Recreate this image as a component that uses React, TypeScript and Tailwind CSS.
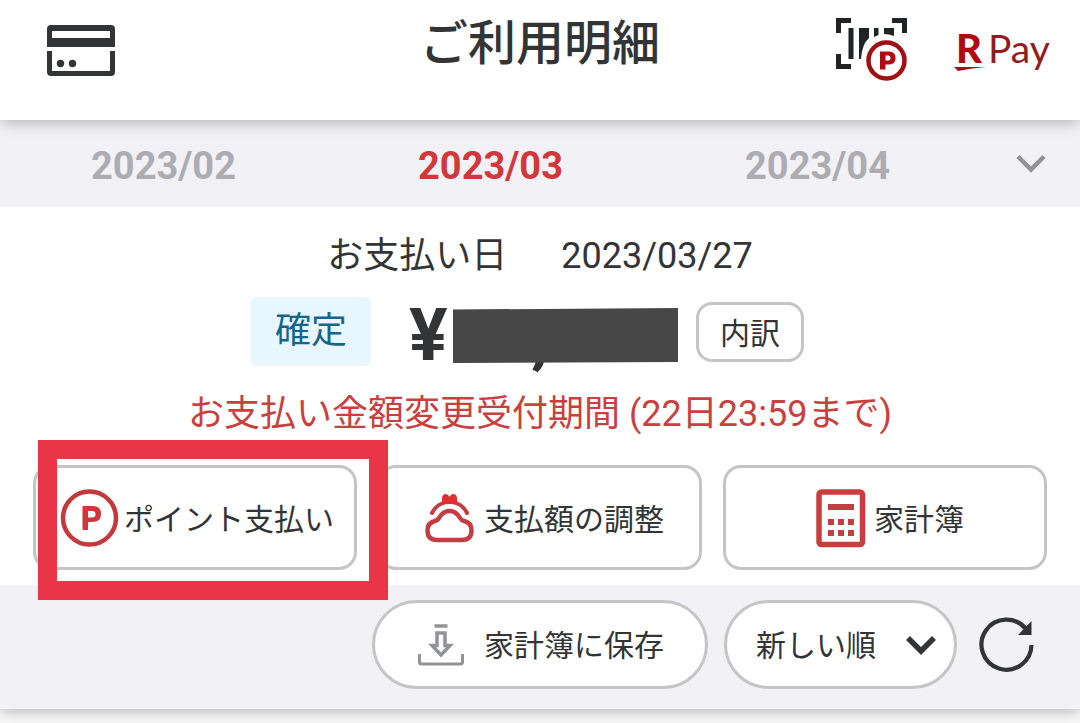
import type { ReactNode } from "react";

function CardIcon() {
  return (
    <svg width="70" height="52" viewBox="0 0 70 52" fill="#333435" aria-hidden="true">
      <path fillRule="evenodd" d="M5 0h60a4 4 0 0 1 4 4v18H1V4a4 4 0 0 1 4-4zm1 6v7h58V6z" />
      <path d="M1 26h5v20h58V26h5v21a4 4 0 0 1-4 4H5a4 4 0 0 1-4-4z" />
      <circle cx="14.500" cy="38.500" r="3.700" />
      <circle cx="26.500" cy="38.500" r="3.700" />
    </svg>
  );
}

function BarcodeIcon() {
  return (
    <svg width="72" height="66" viewBox="0 0 72 66" aria-hidden="true">
      <g fill="#212426">
        <path d="M1 0h15v5H6v10H1zM57 0h15v15h-5V5H57z" />
        <path d="M1 36h5v10h10v5H1z" />
        <path d="M13.500 10h5v31h-5zM24 10h10v10q-7 6-8 21h-2zM39 10h4.500v7L39 19zM49 10h10v8q-5-2-10-2z" />
      </g>
      <circle cx="51.500" cy="42.500" r="18" fill="#fff" stroke="#9f1014" strokeWidth="4.500" />
      <path fill="#b00b10" fillRule="evenodd" d="M45 33.500h9q6.500 0 6.500 6.500t-6.500 6.500h-3.500v5H45zm5.500 4v5h3q2 0 2-2.500t-2-2.500z" />
    </svg>
  );
}

function PayLogo() {
  return (
    <svg className="overflow-visible" width="98" height="60" viewBox="0 0 98 60" role="img" aria-label="R Pay">
      <text x="3" y="42" fontFamily="Lato, sans-serif" fontSize="40" fontWeight="900" fill="#b00810">
        R
      </text>
      <text x="35" y="42" fontFamily="Lato, sans-serif" fontSize="39" fontWeight="400" fill="#941a22">
        Pay
      </text>
      <path d="M1 46h32q-14 1-28 4z" fill="#a60d15" />
    </svg>
  );
}

function PointIcon() {
  return (
    <svg width="60" height="60" viewBox="0 0 60 60" aria-hidden="true">
      <circle cx="29.500" cy="30" r="26.500" fill="none" stroke="#c23a3e" strokeWidth="4.500" />
      <path fill="#cf383b" fillRule="evenodd" d="M22.500 18h10q8.500 0 8.500 8t-8.500 8H28v8h-5.500zM28 23v6.500h4q3.500 0 3.500-3.250T32 23z" />
    </svg>
  );
}

function PurseIcon() {
  return (
    <svg width="60" height="60" viewBox="0 0 60 60" fill="none" stroke="#c23e42" strokeWidth="4.500" strokeLinecap="round" aria-hidden="true">
      <path d="M17 52q-9.500 0-9.500-9.500 0-8 7.500-9.500 2.500-.5 4-3 4-7 10.500-7t10.500 7q1.500 2.500 4 3 7.500 1.500 7.500 9.500 0 9.500-9.500 9.500z" strokeLinejoin="round" />
      <path d="M12 25A19.500 19.500 0 0 1 47 25" strokeWidth="4" />
      <path d="M22 16V10.500q0-4.500 4-4.500 2 0 3.500 3 1.500-3 3.500-3 4 0 4 4.500V16z" fill="#df2f32" stroke="none" />
    </svg>
  );
}

function CalculatorIcon() {
  return (
    <svg width="60" height="60" viewBox="0 0 60 60" fill="#c23e42" aria-hidden="true">
      <rect x="9" y="4" width="43.500" height="52.500" rx="2.500" fill="none" stroke="#cb3c3f" strokeWidth="5.500" />
      <path d="M18 16h26v6H18zM18 31h6v6h-6zM28 31h6v6h-6zM38 31h6v6h-6zM18 42h6v6h-6zM28 42h6v6h-6zM38 42h6v6h-6z" />
    </svg>
  );
}

function SaveIcon() {
  return (
    <svg width="46" height="42" viewBox="0 0 46 42" fill="none" stroke="#929395" aria-hidden="true">
      <path d="M16.500 2h13" strokeWidth="3.500" />
      <path d="M19 9h8v12.500h5L23 31l-9-9.500h5z" strokeWidth="3.500" />
      <path d="M1.500 30v8q0 2 2 2h39q2 0 2-2v-8" strokeWidth="3" />
    </svg>
  );
}

function ReloadIcon() {
  return (
    <svg width="56" height="58" viewBox="0 0 56 58" aria-hidden="true">
      <path d="M52.500 29A25 25 0 1 1 47 13" fill="none" stroke="#333436" strokeWidth="4.200" />
      <path d="M52.500 5v14H39z" fill="#333436" />
    </svg>
  );
}

function ActionButton({ icon, children }: { icon: ReactNode; children: ReactNode }) {
  return (
    <button
      type="button"
      className="flex h-[105px] w-full items-center justify-center gap-1 rounded-[18px] border-3 border-[#c5c5c6] bg-white pl-1 text-[30px] leading-10 whitespace-nowrap"
    >
      {icon}
      <span className="pt-1">{children}</span>
    </button>
  );
}

const months = ["2023/02", "2023/03", "2023/04"];

export default function App() {
  return (
    <div className="min-h-screen bg-[#f8f8f8] font-['Roboto','Noto_Sans_CJK_JP',sans-serif] text-[#333436]">
      <header className="relative z-10 grid grid-cols-[1fr_auto_1fr] items-center bg-white px-[29px] pt-3 pb-[30px] shadow-[0_2px_14px_rgba(0,0,0,0.28)]">
        <button type="button" aria-label="カード" className="ml-[17px] justify-self-start">
          <CardIcon />
        </button>
        <h1 className="pb-[14px] text-[48px] leading-[64px] font-medium">ご利用明細</h1>
        <div className="flex items-center gap-[46px] justify-self-end">
          <button type="button" aria-label="ポイントカード">
            <BarcodeIcon />
          </button>
          <a href="#pay" aria-label="R Pay">
            <PayLogo />
          </a>
        </div>
      </header>

      <main className="bg-[#f2f1f6] shadow-[0_2px_14px_rgba(0,0,0,0.28)]">
        <nav aria-label="月" className="flex h-[87px] items-center pt-1">
          {months.map((month) => (
            <button
              key={month}
              type="button"
              className={
                month === "2023/03"
                  ? "flex-1 text-[38px] leading-12 font-bold text-[#d1373b]"
                  : "flex-1 text-[38px] leading-12 font-bold text-[#acacb1]"
              }
            >
              {month}
            </button>
          ))}
          <button type="button" aria-label="月を選択" className="flex w-[99px] justify-center pb-1">
            <svg width="30" height="20" viewBox="0 0 30 20" fill="none" stroke="#929297" strokeWidth="4.500" aria-hidden="true">
              <path d="M2 2.500 15 15.500 28 2.500" />
            </svg>
          </button>
        </nav>

        <section className="bg-white px-[33px] pt-[22px] pb-[15px]">
          <p className="flex justify-center gap-[54px] text-[36px] leading-[54px]">
            <span>お支払い日</span>
            <time dateTime="2023-03-27">2023/03/27</time>
          </p>

          <div className="mt-[14px] flex h-[69px] items-center justify-center pr-[25px]">
            <span className="h-full w-[120px] rounded-md bg-[#e7f6ff] text-center text-[36px] leading-[68px] text-[#17658a]">
              確定
            </span>
            <div className="relative ml-[38px] flex items-center pt-2 text-[72px] leading-[72px] font-bold">
              <span className="w-[44px]">¥</span>
              <span className="w-[225px] pl-[78px]">,</span>
              <svg className="absolute top-4 right-0" width="225" height="56" viewBox="0 0 225 56" aria-hidden="true">
                <path d="M0 1.500 225 0V54L0 55z" fill="#474747" />
              </svg>
            </div>
            <button type="button" className="ml-[18px] h-[60px] w-[108px] rounded-[16px] border-3 border-[#c5c5c6] pt-1 text-[30px] leading-10">
              内訳
            </button>
          </div>

          <p className="mt-[21px] text-center text-[36px] leading-[54px] text-[#c9403f]">
            お支払い金額変更受付期間 (22日23:59まで)
          </p>

          <div className="mt-6 grid grid-cols-3 gap-[21px]">
            <div className="relative">
              <ActionButton icon={<PointIcon />}>ポイント支払い</ActionButton>
              <div className="pointer-events-none absolute -top-[25px] -right-[31px] -bottom-[30px] left-[5px] z-10 border-[19px] border-[#ea3548]" />
            </div>
            <ActionButton icon={<PurseIcon />}>支払額の調整</ActionButton>
            <ActionButton icon={<CalculatorIcon />}>家計簿</ActionButton>
          </div>
        </section>

        <div className="flex items-center justify-end gap-4 pt-[15px] pr-[45px] pb-5">
          <button
            type="button"
            className="flex h-[89px] w-[336px] items-center justify-center gap-5 rounded-full border-3 border-[#c5c5c6] bg-white pl-0.5 text-[30px] leading-10"
          >
            <SaveIcon />
            <span className="pt-0.5">家計簿に保存</span>
          </button>
          <div className="relative">
            <select
              aria-label="並び順"
              className="h-[89px] w-[233px] appearance-none rounded-full border-3 border-[#c5c5c6] bg-white pt-0.5 pl-[29px] text-[30px] leading-10"
            >
              <option>新しい順</option>
            </select>
            <svg
              className="pointer-events-none absolute top-[35px] right-[21px]"
              width="30"
              height="22"
              viewBox="0 0 30 22"
              fill="none"
              stroke="#333436"
              strokeWidth="5.500"
              aria-hidden="true"
            >
              <path d="M2 3 15 16 28 3" />
            </svg>
          </div>
          <button type="button" aria-label="更新" className="ml-[6px]">
            <ReloadIcon />
          </button>
        </div>
      </main>
    </div>
  );
}
